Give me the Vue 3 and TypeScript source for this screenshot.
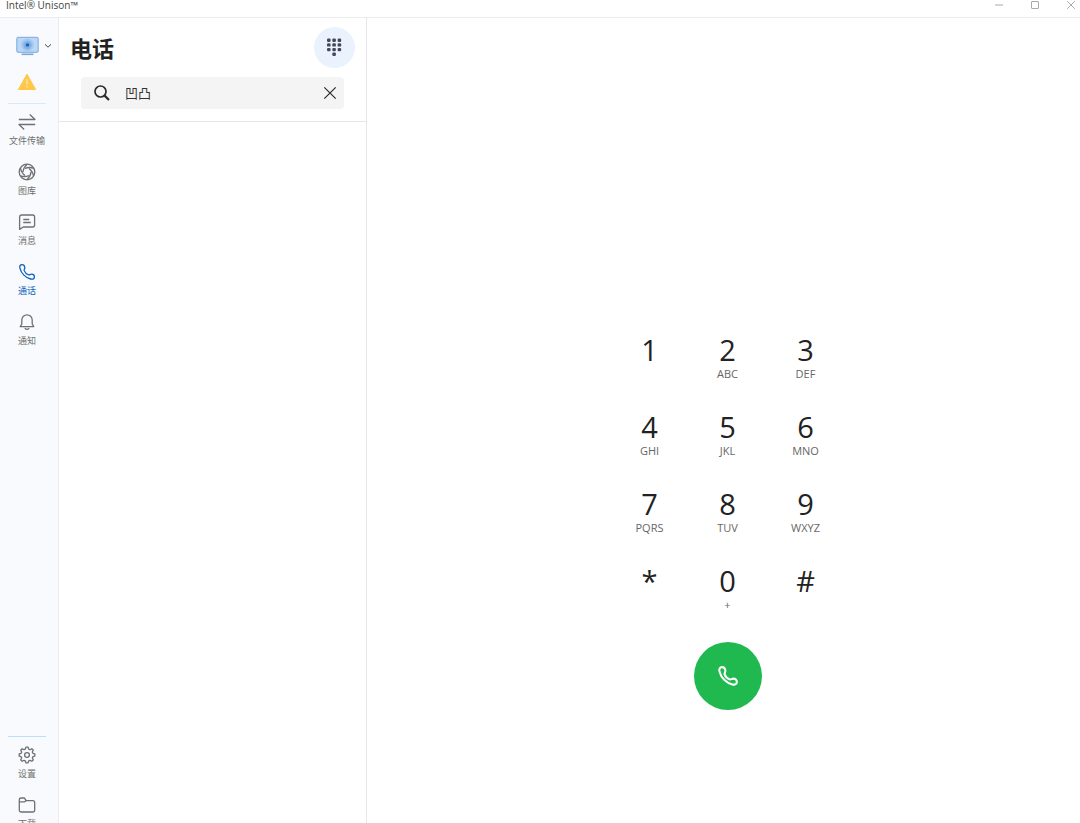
<script setup lang="ts">
import { ref } from 'vue'

interface NavItem {
  id: string
  label: string
}
interface DialKey {
  digit: string
  letters: string
}

const navItems: NavItem[] = [
  { id: 'transfer', label: '文件传输' },
  { id: 'gallery', label: '图库' },
  { id: 'messages', label: '消息' },
  { id: 'calls', label: '通话' },
  { id: 'notifications', label: '通知' },
]
const footerItems: NavItem[] = [
  { id: 'settings', label: '设置' },
  { id: 'downloads', label: '下载' },
]
const dialKeys: DialKey[] = [
  { digit: '1', letters: '' },
  { digit: '2', letters: 'ABC' },
  { digit: '3', letters: 'DEF' },
  { digit: '4', letters: 'GHI' },
  { digit: '5', letters: 'JKL' },
  { digit: '6', letters: 'MNO' },
  { digit: '7', letters: 'PQRS' },
  { digit: '8', letters: 'TUV' },
  { digit: '9', letters: 'WXYZ' },
  { digit: '*', letters: '' },
  { digit: '0', letters: '+' },
  { digit: '#', letters: '' },
]
const blades = [0, 60, 120, 180, 240, 300]
const dots = [
  [0, 0], [1, 0], [2, 0],
  [0, 1], [1, 1], [2, 1],
  [0, 2], [1, 2], [2, 2],
  [1, 3],
]
const handset =
  'M3 6.4C2.1 4.2 3.3 2.6 5 2.6S7.6 4 7.8 5.4 7 7.4 7.1 8.4C7.8 10.4 9.6 12.2 11.6 12.9 12.6 13 13.2 12.2 14.6 12.2S17.4 13.4 17.4 15 16 17.6 13.6 17C8.6 15.8 4.2 11.4 3 6.4Z'

const active = ref('calls')
const query = ref('凹凸')
</script>

<template>
  <div class="window">
    <header class="titlebar">
      <span class="app-name">Intel® Unison™</span>
      <div class="window-controls">
        <button type="button" aria-label="最小化">
          <svg width="10" height="10" viewBox="0 0 10 10"><path d="M1 5H9" /></svg>
        </button>
        <button type="button" aria-label="最大化">
          <svg width="10" height="10" viewBox="0 0 10 10"><rect x="1.5" y="1.5" width="7" height="7" rx=".5" /></svg>
        </button>
        <button type="button" aria-label="关闭">
          <svg width="10" height="10" viewBox="0 0 10 10"><path d="M1.2 1.2 8.8 8.8M8.8 1.2 1.2 8.8" /></svg>
        </button>
      </div>
    </header>

    <div class="body">
      <nav class="rail">
        <button type="button" class="device" aria-label="设备">
          <svg width="23" height="20" viewBox="0 0 23 20">
            <rect x=".8" y="1.3" width="21.4" height="15" rx="1.2" fill="#bcd7f5" stroke="#78a9de" />
            <circle cx="11.5" cy="9" r="6.4" fill="#a3c7ef" />
            <circle cx="11.5" cy="9" r="4.2" fill="#83b1e4" />
            <circle cx="11.5" cy="9" r="1.8" fill="#1565b8" />
            <path d="M5.5 18.3H17.5" stroke="#78a9de" stroke-width="1.6" />
          </svg>
          <svg width="8" height="6" viewBox="0 0 8 6">
            <path d="M1 1.3 4 4.2 7 1.3" fill="none" stroke="#444" stroke-width="1" />
          </svg>
        </button>
        <button type="button" class="warning" aria-label="警告">
          <svg width="20" height="18" viewBox="0 0 20 18">
            <path d="M10 1.2 18.6 16.5H1.4Z" fill="#ffc84a" stroke="#ffc84a" stroke-linejoin="round" />
            <path d="M10 6.2V11.5M10 13V14.3" stroke="#fff3cf" stroke-width="1.1" />
          </svg>
        </button>

        <div class="group">
          <button
            v-for="item in navItems"
            :key="item.id"
            type="button"
            class="nav-item"
            :class="{ active: active === item.id }"
            @click="active = item.id"
          >
            <svg width="20" height="20" viewBox="0 0 20 20">
              <template v-if="item.id === 'transfer'">
                <path d="M1.8 7.5H18L12.8 2.5M18.2 12.5H2L7.2 17.5" />
              </template>
              <template v-else-if="item.id === 'gallery'">
                <circle cx="10" cy="10" r="7.8" />
                <path
                  v-for="angle in blades"
                  :key="angle"
                  d="M7.9 6.4Q12.8 4.6 16.8 6.4"
                  :transform="`rotate(${angle} 10 10)`"
                />
              </template>
              <template v-else-if="item.id === 'messages'">
                <path d="M4.4 3H15.6A2 2 0 0 1 17.6 5V13A2 2 0 0 1 15.6 15H6.2L2.6 17.4V5A2 2 0 0 1 4.4 3ZM6.3 7.5H12.2M6.3 10.5H13.8" />
              </template>
              <template v-else-if="item.id === 'calls'">
                <path :d="handset" />
              </template>
              <template v-else>
                <path d="M3.2 14.6H16.8L15.2 12V8A5.2 5.2 0 0 0 4.8 8V12ZM7.8 16.2Q10 18.6 12.2 16.2" />
              </template>
            </svg>
            <span>{{ item.label }}</span>
          </button>
        </div>

        <div class="group footer">
          <button v-for="item in footerItems" :key="item.id" type="button" class="nav-item">
            <svg width="20" height="20" viewBox="0 0 20 20">
              <template v-if="item.id === 'settings'">
                <path d="M8.3 4.1 8.9 2.2H11.1L11.7 4.1 13 4.7 14.8 3.7 16.3 5.2 15.3 7 15.9 8.3 17.8 8.9V11.1L15.9 11.7 15.3 13 16.3 14.8 14.8 16.3 13 15.3 11.7 15.9 11.1 17.8H8.9L8.3 15.9 7 15.3 5.2 16.3 3.7 14.8 4.7 13 4.1 11.7 2.2 11.1V8.9L4.1 8.3 4.7 7 3.7 5.2 5.2 3.7 7 4.7Z" />
                <circle cx="10" cy="10" r="2.4" />
              </template>
              <template v-else>
                <path d="M2.3 15.2V4.8A1.8 1.8 0 0 1 4.1 3H7.3L9.3 5.6H15.8A1.9 1.9 0 0 1 17.7 7.5V15.2A1.8 1.8 0 0 1 15.9 17H4.1A1.8 1.8 0 0 1 2.3 15.2ZM2.3 6.8H7.5L9.3 5.6" />
              </template>
            </svg>
            <span>{{ item.label }}</span>
          </button>
        </div>
      </nav>

      <section class="panel">
        <div class="panel-head">
          <div class="heading">
            <h1>电话</h1>
            <button type="button" class="dialpad-toggle" aria-label="拨号键盘">
              <svg width="17" height="19" viewBox="0 0 17 19">
                <rect
                  v-for="([col, row], i) in dots"
                  :key="i"
                  :x="1 + col * 5.3"
                  :y="0.5 + row * 4.7"
                  width="3.6"
                  height="3.4"
                  rx="1.2"
                  fill="#444859"
                />
              </svg>
            </button>
          </div>
          <div class="search">
            <label for="contact-search" aria-label="搜索">
              <svg width="18" height="18" viewBox="0 0 18 18">
                <circle cx="7.5" cy="7.5" r="5.5" />
                <path d="M11.6 11.6 16 16" stroke-width="2.2" />
              </svg>
            </label>
            <input id="contact-search" v-model="query" type="text" spellcheck="false" />
            <button type="button" class="clear" aria-label="清除" @click="query = ''">
              <svg width="14" height="14" viewBox="0 0 14 14">
                <path d="M1.3 1.3 12.7 12.7M12.7 1.3 1.3 12.7" stroke-width="1.2" />
              </svg>
            </button>
          </div>
        </div>
      </section>

      <main class="dialer">
        <div class="keys">
          <button v-for="key in dialKeys" :key="key.digit" type="button" class="key">
            <span class="digit">{{ key.digit }}</span>
            <span v-if="key.letters" class="letters">{{ key.letters }}</span>
          </button>
        </div>
        <button type="button" class="call" aria-label="呼叫">
          <svg width="24" height="24" viewBox="0 0 20 20">
            <path :d="handset" />
          </svg>
        </button>
      </main>
    </div>
  </div>
</template>

<style>
body {
  margin: 0;
  background: #fff;
}
</style>

<style scoped>
.window {
  display: flex;
  flex-direction: column;
  height: 100vh;
  overflow: hidden;
  background: #fff;
  color: #222;
  font-family: 'Open Sans', 'Noto Sans CJK SC', sans-serif;
}
button {
  padding: 0;
  border: 0;
  background: none;
  color: inherit;
  font: inherit;
  cursor: pointer;
}
svg {
  display: block;
  flex: none;
}
.titlebar {
  display: flex;
  justify-content: space-between;
  align-items: flex-start;
  flex: none;
  height: 17px;
  padding-left: 6px;
  border-bottom: 1px solid #ececec;
}
.app-name {
  font-size: 10px;
  line-height: 10px;
  color: #444;
}
.window-controls {
  display: flex;
  gap: 26px;
  padding-right: 4px;
}
.window-controls svg {
  fill: none;
  stroke: #aaa;
}
.body {
  display: flex;
  flex: 1;
  min-height: 0;
}
.rail {
  display: flex;
  flex-direction: column;
  flex: none;
  box-sizing: border-box;
  width: 59px;
  padding: 18px 12px 0 8px;
  background: #f8fafd;
  border-right: 1px solid #ececef;
}
.device {
  display: flex;
  align-items: center;
  gap: 5px;
  margin-left: 8px;
}
.warning {
  align-self: center;
  margin: 17px 0 12px;
}
.group {
  display: flex;
  flex-direction: column;
  padding-top: 3px;
  border-top: 1px solid #d9e8f7;
}
.footer {
  margin-top: auto;
  margin-bottom: -17px;
  border-top-color: #bfdcf5;
}
.nav-item {
  display: flex;
  flex-direction: column;
  align-items: center;
  gap: 3px;
  height: 50px;
  padding-top: 5px;
  color: #707070;
  font-size: 9px;
  line-height: 12px;
  white-space: nowrap;
}
.nav-item svg {
  fill: none;
  stroke: currentColor;
  stroke-width: 1.3;
  stroke-linejoin: round;
}
.nav-item.active {
  color: #0d61bb;
}
.panel {
  flex: none;
  width: 307px;
  border-right: 1px solid #e6e6e8;
}
.panel-head {
  padding: 9px 11px 12px;
  border-bottom: 1px solid #e6e6e8;
}
.heading {
  display: flex;
  align-items: center;
  justify-content: space-between;
}
h1 {
  margin: 0;
  font-size: 22px;
  line-height: 32px;
  font-weight: 700;
}
.dialpad-toggle {
  display: flex;
  align-items: center;
  justify-content: center;
  width: 41px;
  height: 41px;
  border-radius: 50%;
  background: #eaf2fe;
}
.search {
  display: flex;
  align-items: center;
  height: 32px;
  margin: 9px 11px 0;
  border-radius: 4px;
  background: #f4f4f4;
}
.search svg {
  fill: none;
  stroke: #2b2b2b;
  stroke-width: 1.7;
}
.search label {
  padding: 0 14px 0 12px;
}
.search input {
  flex: 1;
  min-width: 0;
  padding: 0;
  border: 0;
  outline: 0;
  background: none;
  color: #333;
  font: 13px/20px 'Open Sans', 'Noto Sans CJK SC', sans-serif;
}
.clear {
  padding: 7px;
}
.dialer {
  display: flex;
  flex-direction: column;
  align-items: center;
  justify-content: flex-end;
  flex: 1;
  padding: 0 0 113px 8px;
}
.keys {
  display: grid;
  grid-template-columns: repeat(3, 78px);
  grid-auto-rows: 77px;
}
.key {
  display: flex;
  flex-direction: column;
  align-items: center;
}
.digit {
  font-size: 29px;
  line-height: 32px;
}
.letters {
  font-size: 11px;
  line-height: 16px;
  color: #666;
}
.call {
  display: flex;
  align-items: center;
  justify-content: center;
  width: 68px;
  height: 68px;
  border-radius: 50%;
  background: #1fb950;
}
.call svg {
  fill: none;
  stroke: #fff;
  stroke-width: 1.7;
}
</style>
